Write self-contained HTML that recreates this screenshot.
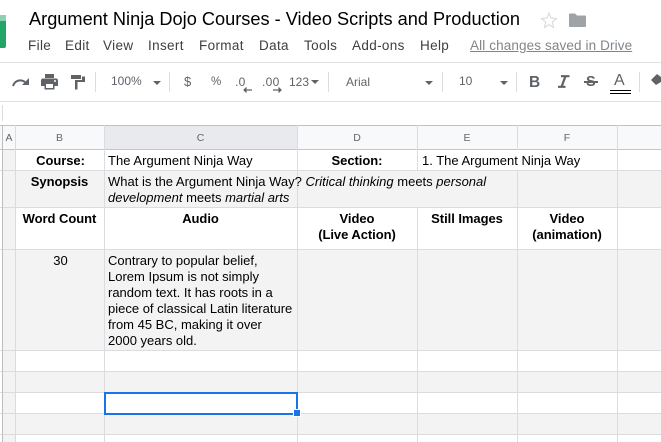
<!DOCTYPE html>
<html><head><meta charset="utf-8"><style>
html,body{margin:0;padding:0;background:#fff}
#p{position:relative;width:661px;height:442px;overflow:hidden;background:#fff;font-family:"Liberation Sans",sans-serif;color:#000}
#p div{position:absolute}
.t{white-space:nowrap}
.m{font-size:13.5px;color:#3c4043;top:38px;line-height:16px;letter-spacing:.35px}
.tb{font-size:12px;color:#5f6368;line-height:14px;top:75px}
.h{background:#dadce0}
.v{width:1px;background:#dadce0}
.r{height:1px;left:0;width:661px;background:#dadce0}
.g{background:#f3f3f3;left:15px;width:646px}
.c{font-size:13px;line-height:16px;white-space:nowrap}
.b{font-weight:bold;text-align:center;letter-spacing:-.05px}
.hd{font-size:10.5px;color:#666;top:132px;line-height:12px;text-align:center}
.s{width:1px;background:#dadce0;top:72px;height:20px}
</style></head><body><div id="p">
<div style="left:0;top:15px;width:6px;height:33px;background:#23a566;border-radius:0 2px 2px 0"></div>
<div style="left:0;top:15px;width:6px;height:6px;background:#8ed1b1"></div>
<div class="t" style="left:29px;top:8px;font-size:18.2px;line-height:22px;color:#000">Argument Ninja Dojo Courses - Video Scripts and Production</div>
<svg style="position:absolute;left:540px;top:11px" width="18" height="18" viewBox="0 0 18 18"><path d="M9 2l2 5 5.500.5-4.200 3.600 1.300 5.400L9 13.600 4.400 16.500l1.300-5.400L1.500 7.500 7 7z" fill="none" stroke="#d5d7da" stroke-width="1"/></svg>
<svg style="position:absolute;left:569px;top:13px" width="17" height="14" viewBox="0 0 17 14"><path d="M0 1.500Q0 .5 1 .5H6L8 2.500H16Q17 2.500 17 3.500V13Q17 14 16 14H1Q0 14 0 13z" fill="#a0a3a6"/></svg>
<div class="t m" style="left:28px">File</div><div class="t m" style="left:65px">Edit</div><div class="t m" style="left:103px">View</div><div class="t m" style="left:148px">Insert</div><div class="t m" style="left:199px">Format</div><div class="t m" style="left:259px">Data</div><div class="t m" style="left:304px">Tools</div><div class="t m" style="left:352px">Add-ons</div><div class="t m" style="left:420px">Help</div>
<div class="t m" style="left:470px;color:#80868b;text-decoration:underline;letter-spacing:.12px">All changes saved in Drive</div>

<div class="r" style="top:62px;background:#e0e0e0"></div><div class="r" style="top:101px;background:#e0e0e0"></div>
<div style="left:2px;top:105px;width:1px;height:16px;background:#dadce0"></div>
<svg style="position:absolute;left:12px;top:75px" width="18" height="14" viewBox="0 0 18 14"><path d="M1 11C3 5 9 4 13 7" fill="none" stroke="#5f6368" stroke-width="2"/><path d="M17 3v7h-7z" fill="#5f6368"/></svg>
<svg style="position:absolute;left:41px;top:74px" width="17" height="16" viewBox="0 0 17 16"><path d="M4 0h9v4H4z M2 4.500h13q2 0 2 2V12h-3.500v3.500h-10V12H0V6.500q0-2 2-2z" fill="#5f6368"/><path d="M5 10h7v4H5z" fill="#fff"/><circle cx="14" cy="7" r="1" fill="#fff"/></svg>
<svg style="position:absolute;left:71px;top:74px" width="14" height="16" viewBox="0 0 14 16"><path d="M0 1h10v4H0z M11 2.500h3V8H6.500v7.500H4V6h7z" fill="#5f6368"/></svg>
<div class="s" style="left:95px"></div>
<div class="t tb" style="left:111px;top:74px">100%</div>
<div style="left:153px;top:81px;border:4px solid transparent;border-top:4px solid #5f6368"></div>
<div class="s" style="left:169px"></div>
<div class="t tb" style="left:184px;top:75px;font-size:13px">$</div>
<div class="t tb" style="left:211px;font-size:11.5px">%</div>
<div class="t tb" style="left:235px;top:75px;letter-spacing:.3px">.0</div>
<svg style="position:absolute;left:243px;top:87px" width="9" height="6"><path d="M1 3h8M3.500 .5L1 3l2.500 2.500" fill="#5f6368" stroke="#5f6368" stroke-width="1.200"/></svg>
<div class="t tb" style="left:262px;top:75px;letter-spacing:.3px">.00</div>
<svg style="position:absolute;left:273px;top:87px" width="9" height="6"><path d="M0 3h8M5.500 .5L8 3 5.500 5.500" fill="#5f6368" stroke="#5f6368" stroke-width="1.200"/></svg>
<div class="t tb" style="left:289px">123</div>
<div style="left:311px;top:80px;border:4px solid transparent;border-top:4px solid #5f6368"></div>
<div class="s" style="left:328px"></div>
<div class="t tb" style="left:346px;top:75px">Arial</div>
<div style="left:425px;top:81px;border:4px solid transparent;border-top:4px solid #5f6368"></div>
<div class="s" style="left:442px"></div>
<div class="t tb" style="left:459px;top:74px">10</div>
<div style="left:500px;top:81px;border:4px solid transparent;border-top:4px solid #5f6368"></div>
<div class="s" style="left:516px"></div>
<div class="t tb" style="left:529px;top:74px;font-size:15.5px;font-weight:bold;line-height:17px">B</div>
<svg style="position:absolute;left:557px;top:75px" width="13" height="13"><path d="M4 1.200h8.500M1 11.800h7.500M8.500 1.200L4.500 11.800" stroke="#5f6368" stroke-width="2.200" fill="none"/></svg>
<div class="t tb" style="left:586px;top:74px;font-size:14.5px;font-weight:bold;line-height:17px">S</div>
<div style="left:584px;top:81px;width:14px;height:2px;background:#5f6368"></div>
<div class="t tb" style="left:614px;top:72px;font-size:16px;line-height:18px">A</div>
<div style="left:610px;top:90px;width:21px;height:1px;background:#000"></div><div style="left:610px;top:93px;width:21px;height:1px;background:#000"></div>
<div class="s" style="left:639px"></div>
<svg style="position:absolute;left:651px;top:73px" width="10" height="16"><path d="M6 1L0 7l5 5 5-3V4z" fill="#5f6368"/></svg>

<div style="left:0;top:125px;width:661px;height:25px;background:#f8f9fa"></div>
<div style="left:105px;top:126px;width:192px;height:24px;background:#e8eaed"></div>
<div style="left:3px;top:150px;width:12px;height:292px;background:#f3f3f3"></div>
<div class="g" style="top:171px;height:36px"></div>
<div class="g" style="top:250px;height:100px"></div>
<div class="g" style="top:372px;height:20px"></div>
<div class="g" style="top:414px;height:20px"></div>

<div class="r" style="top:125px;height:1px;background:#c0c0c0"></div>
<div class="r" style="top:149px;background:#c4c7c9"></div>
<div class="r" style="top:170px"></div><div class="r" style="top:207px"></div><div class="r" style="top:249px"></div><div class="r" style="top:350px"></div><div class="r" style="top:371px"></div><div class="r" style="top:392px"></div><div class="r" style="top:413px"></div><div class="r" style="top:434px"></div>
<div style="left:2px;top:125px;width:1px;height:317px;background:#bdbdbd"></div>
<div class="v" style="left:15px;top:125px;height:317px"></div>
<div class="v" style="left:104px;top:125px;height:317px"></div>
<div class="v" style="left:297px;top:125px;height:317px"></div>
<div class="v" style="left:417px;top:125px;height:46px"></div><div class="v" style="left:417px;top:207px;height:235px"></div>
<div class="v" style="left:517px;top:125px;height:25px"></div><div class="v" style="left:517px;top:171px;height:271px"></div>
<div class="v" style="left:617px;top:125px;height:317px"></div>

<div class="hd" style="left:3px;width:12px">A</div><div class="hd" style="left:15px;width:89px">B</div><div class="hd" style="left:104px;width:193px">C</div><div class="hd" style="left:297px;width:120px">D</div><div class="hd" style="left:417px;width:100px">E</div><div class="hd" style="left:517px;width:100px">F</div>

<div class="c b" style="left:16px;width:89px;top:153px">Course:</div>
<div class="c" style="left:108px;top:153px;letter-spacing:.03px">The Argument Ninja Way</div>
<div class="c b" style="left:297px;width:120px;top:153px">Section:</div>
<div class="c" style="left:422px;top:153px">1. The Argument Ninja Way</div>
<div class="c b" style="left:15px;width:89px;top:174px">Synopsis</div>
<div class="c" style="left:108px;top:174px">What is the Argument Ninja Way? <i>Critical thinking</i> meets <i>personal</i><br><i>development</i> meets <i>martial arts</i></div>
<div class="c b" style="left:15px;width:89px;top:211px">Word Count</div>
<div class="c b" style="left:104px;width:193px;top:211px">Audio</div>
<div class="c b" style="left:297px;width:120px;top:211px">Video<br>(Live Action)</div>
<div class="c b" style="left:417px;width:100px;top:211px">Still Images</div>
<div class="c b" style="left:517px;width:100px;top:211px">Video<br>(animation)</div>
<div class="c" style="left:16px;width:89px;top:253px;text-align:center">30</div>
<div class="c" style="left:108px;top:253px">Contrary to popular belief,<br>Lorem Ipsum is not simply<br>random text. It has roots in a<br>piece of classical Latin literature<br>from 45 BC, making it over<br>2000 years old.</div>

<div style="left:104px;top:392px;width:190px;height:19px;border:2px solid #1a73e8"></div>
<div style="left:293px;top:409px;width:6px;height:6px;background:#1a73e8;border:1px solid #fff"></div>
</div></body></html>
